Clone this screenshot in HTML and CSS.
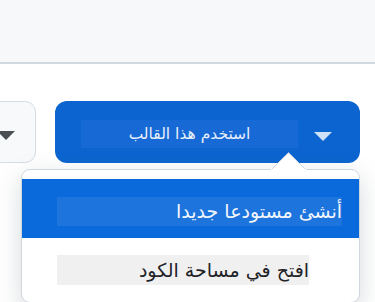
FILE: index.html
```html
<!DOCTYPE html>
<html lang="ar">
<head>
<meta charset="utf-8">
<link rel="stylesheet" href="styles.css">
</head>
<body>
<div class="topbar"></div>
<div class="toolbar">
  <div class="btn-secondary">
    <svg class="caret-dark" width="18" height="9" viewBox="0 0 18 9"><polygon points="0,0 18,0 9,9" fill="#4a4f55"/></svg>
  </div>
  <div class="btn-wrap">
    <button class="btn-primary" type="button">
      <span class="label">استخدم هذا القالب</span>
      <svg class="caret" width="18" height="9" viewBox="0 0 18 9"><polygon points="0,0 18,0 9,9" fill="#cfe1f7"/></svg>
    </button>
    <div class="menu">
      <svg class="menu-arrow" width="35" height="18" viewBox="0 0 35 18"><polygon points="0.5,17.5 17.5,0.7 34.5,17.5" fill="#ffffff" stroke="#d0d7de" stroke-width="1"/><rect x="0" y="17" width="35" height="2" fill="#ffffff"/></svg>
      <div class="item active"><span class="item-label">أنشئ مستودعا جديدا</span></div>
      <div class="item second"><span class="item-label alt">افتح في مساحة الكود</span></div>
    </div>
  </div>
</div>
</body>
</html>
```

FILE: styles.css
```css
html, body {
  margin: 0;
  padding: 0;
  background: #ffffff;
  overflow: hidden;
  height: 302px;
}
body {
  font-family: "DejaVu Sans", "Noto Sans", sans-serif;
}
.topbar {
  height: 62px;
  background: #f6f8fa;
  border-bottom: 2px solid #d0d8e0;
}
.toolbar {
  display: flex;
  align-items: flex-start;
  gap: 19px;
  padding-top: 37px;
}
.btn-secondary {
  box-sizing: border-box;
  width: 62px;
  height: 62px;
  margin-left: -26px;
  background: #f8f9fa;
  border: 1.5px solid #d6dce2;
  border-radius: 11px;
  display: flex;
  align-items: center;
  justify-content: flex-end;
  padding-right: 20px;
}
.caret-dark {
  display: block;
  margin-top: 6px;
}
.btn-wrap {
  position: relative;
}
.btn-primary {
  box-sizing: border-box;
  width: 305px;
  height: 62px;
  margin: 0;
  border: 0;
  border-radius: 12px;
  background: #0b64d0;
  display: flex;
  align-items: flex-start;
  padding: 19px 28px 0 26px;
  gap: 16px;
  font-family: inherit;
}
.label {
  display: block;
  width: 217px;
  height: 28px;
  line-height: 28px;
  background: #1769d6;
  color: #eaf1fb;
  font-size: 15.5px;
  text-align: center;
  direction: rtl;
}
.caret {
  display: block;
  margin-top: 12px;
}
.menu {
  position: absolute;
  left: -34px;
  top: 68px;
  box-sizing: border-box;
  width: 339px;
  height: 134px;
  background: #ffffff;
  border: 1.5px solid #d0d7de;
  border-radius: 9px;
  padding-top: 9px;
  box-shadow: 0 8px 24px rgba(120, 130, 140, 0.3);
}
.menu-arrow {
  position: absolute;
  left: 249px;
  top: -18px;
  display: block;
}
.item {
  direction: ltr;
}
.item.active {
  height: 59px;
  box-sizing: border-box;
  background: #0a69db;
  padding: 18px 17px 0 35px;
}
.item.second {
  padding: 17px 50px 0 35px;
}
.item-label {
  display: block;
  height: 29px;
  line-height: 29px;
  background: #1e74dd;
  color: #f2f6fc;
  font-size: 19px;
  text-align: right;
  direction: rtl;
  overflow: hidden;
}
.item-label.alt {
  height: 30px;
  line-height: 30px;
  background: #f0f0f0;
  color: #1f2328;
}
```
